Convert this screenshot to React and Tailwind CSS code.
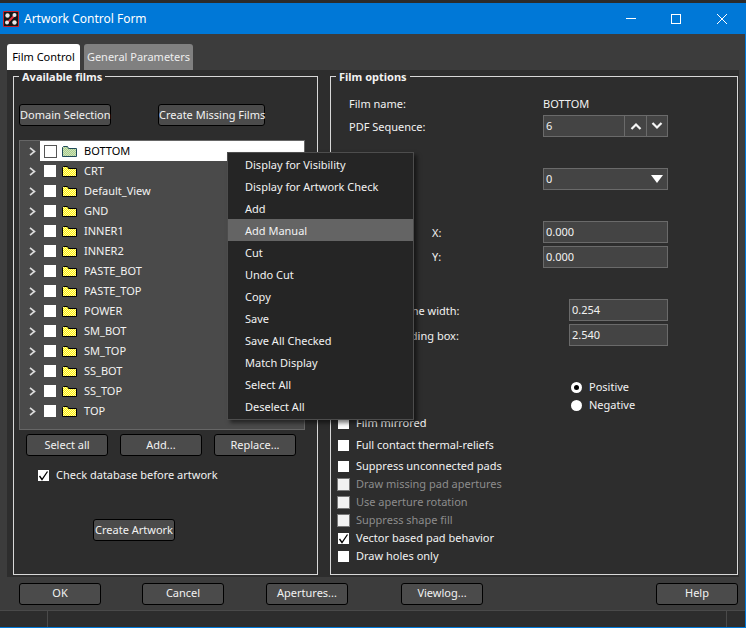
import React from 'react';

const FILMS = ['BOTTOM', 'CRT', 'Default_View', 'GND', 'INNER1', 'INNER2', 'PASTE_BOT', 'PASTE_TOP', 'POWER', 'SM_BOT', 'SM_TOP', 'SS_BOT', 'SS_TOP', 'TOP'];

const MENU = ['Display for Visibility', 'Display for Artwork Check', 'Add', 'Add Manual', 'Cut', 'Undo Cut', 'Copy', 'Save', 'Save All Checked', 'Match Display', 'Select All', 'Deselect All'];

const OPTIONS = [
  { label: 'Full contact thermal-reliefs', row: 'h-[22px]' },
  { label: 'Suppress unconnected pads', row: 'h-[18px] mt-px' },
  { label: 'Draw missing pad apertures', disabled: true },
  { label: 'Use aperture rotation', disabled: true },
  { label: 'Suppress shape fill', disabled: true },
  { label: 'Vector based pad behavior', checked: true },
  { label: 'Draw holes only' },
];

const Btn = ({ children, className = '' }) => (
  <button className={`h-[22px] rounded-[3px] border border-black bg-[#4b4b4b] text-center text-[#f2f2f2] whitespace-nowrap ${className}`}>
    {children}
  </button>
);

const Tick = () => (
  <svg width="11" height="11" viewBox="0 0 11 11">
    <path d="M1.5 6 L4 9.5 L9.5 1.5" fill="none" stroke="#000" strokeWidth="1.3" />
  </svg>
);

const Check = ({ checked, disabled }) => (
  <span className={`flex shrink-0 items-center justify-center ${disabled ? 'w-[13px] h-[13px] -mx-px border border-[#777] bg-[#f2f2f2]' : 'w-[11px] h-[11px] bg-white'}`}>
    {checked && <Tick />}
  </span>
);

// dithered fill, same in every row so the pattern ids can stay fixed
const Folder = ({ selected }) => {
  const id = selected ? 'ditherGreen' : 'ditherYellow';
  return (
    <svg width="15" height="11" viewBox="0 0 15 11" className="shrink-0">
      <defs>
        <pattern id={id} width="2" height="2" patternUnits="userSpaceOnUse">
          <rect width="2" height="2" fill={selected ? '#a8d088' : '#fff200'} />
          <rect width="1" height="1" fill={selected ? '#d0e0c0' : '#fffbb0'} />
          <rect x="1" y="1" width="1" height="1" fill={selected ? '#d0e0c0' : '#fffbb0'} />
        </pattern>
      </defs>
      <path d="M0.5 10.5 V1.5 L1.5 0.5 H5.5 L6.5 2.5 H14.5 V10.5 Z" fill={`url(#${id})`} stroke={selected ? '#1f4a5a' : '#000'} />
    </svg>
  );
};

const Chevron = () => (
  <svg width="7" height="9" viewBox="0 0 7 9" className="shrink-0">
    <path d="M1 0.8 L5.5 4.5 L1 8.2" fill="none" stroke="#dcdcdc" strokeWidth="1.7" />
  </svg>
);

const TreeRow = ({ name, selected }) => (
  <div className="flex h-5 items-center pl-[9px]">
    <Chevron />
    <div className={`ml-[4px] flex h-5 flex-1 items-center pl-[4px] ${selected ? 'bg-white text-black' : 'text-[#f2f2f2]'}`}>
      {selected ? (
        <span className="h-[13px] w-[13px] border border-[#555] bg-white" />
      ) : (
        <span className="h-3 w-3 bg-white" />
      )}
      <span className={selected ? 'ml-[5px]' : 'ml-[6px]'}>
        <Folder selected={selected} />
      </span>
      <span className="ml-[7px]">{name}</span>
    </div>
  </div>
);

const Field = ({ children, className = '' }) => (
  <div className={`flex h-[22px] items-center border border-[#6a6a6a] bg-[#444444] pl-[2px] text-[#f2f2f2] ${className}`}>
    {children}
  </div>
);

const Radio = ({ on }) => (
  <span className="flex h-[11px] w-[11px] items-center justify-center rounded-full bg-white">
    {on && <span className="h-[5px] w-[5px] rounded-full bg-black" />}
  </span>
);

const App = () => {
  return (
    <div className="relative flex h-[628px] w-[746px] flex-col overflow-hidden bg-[#3c3c3c] text-[11px] text-[#f2f2f2]" style={{ fontFamily: '"Noto Sans", sans-serif' }}>
      <div className="h-[3px] bg-[#2b2b2b]" />

      {/* Title bar */}
      <div className="flex h-[31px] items-center bg-[#0078d7] pl-[3px] text-[12px] text-white">
        <svg width="16" height="16" viewBox="0 0 16 16">
          <rect width="16" height="16" rx="1" fill="#c4202c" />
          <rect x="1" y="1" width="14" height="14" fill="#161616" />
          <path d="M4 12 L12 4" stroke="#e8303c" strokeWidth="2" />
          <circle cx="4.5" cy="4.5" r="2.2" fill="#e8e8e8" />
          <circle cx="11.5" cy="4" r="2" fill="#e8e8e8" />
          <circle cx="4" cy="11.5" r="2" fill="#e8e8e8" />
          <circle cx="11.5" cy="11.5" r="2.2" fill="#e8e8e8" />
        </svg>
        <span className="ml-[5px]">Artwork Control Form</span>
        <div className="ml-auto flex items-center">
          <span className="h-px w-[10px] bg-white" />
          <span className="ml-[35px] h-[10px] w-[10px] border border-white" />
          <svg width="10" height="10" viewBox="0 0 10 10" className="ml-[36px] mr-[19px]">
            <path d="M0 0 L10 10 M10 0 L0 10" stroke="#fff" />
          </svg>
        </div>
      </div>

      {/* Tabs */}
      <div className="flex h-[36px] items-end gap-[4px] pl-[7px]">
        <div className="flex h-[26px] w-[73px] items-center justify-center rounded-t-[3px] bg-white pt-px text-black">Film Control</div>
        <div className="flex h-[26px] w-[109px] items-center justify-center rounded-t-[3px] bg-[#808080] pt-px text-[#eeeeee]">General Parameters</div>
      </div>

      {/* Tab page */}
      <div className="ml-[7px] flex h-[507px] w-[732px] gap-[12px] bg-[#2d2d2d] pl-[6px] pr-[1px]">
        <fieldset className="flex h-[505px] w-[305px] flex-col border border-[#d8d8d8]">
          <legend className="ml-[5px] px-[3px] font-bold leading-[12px]"><span className="relative top-px">Available films</span></legend>
          <div className="mt-[22px] flex pl-[5px]">
            <Btn className="w-[92px]">Domain Selection</Btn>
            <Btn className="ml-[47px] w-[107px]">Create Missing Films</Btn>
          </div>
          <div className="ml-[5px] mt-[14px] h-[290px] w-[286px] border border-[#666] bg-[#4a4a4a]">
            {FILMS.map((f, i) => (
              <TreeRow key={f} name={f} selected={i === 0} />
            ))}
          </div>
          <div className="mt-[4px] flex gap-[12px] pl-[12px]">
            <Btn className="w-[82px]">Select all</Btn>
            <Btn className="w-[82px]">Add...</Btn>
            <Btn className="w-[82px]">Replace...</Btn>
          </div>
          <div className="mt-[13px] flex h-[12px] items-center gap-[7px] pl-[24px]">
            <Check checked />
            <span>Check database before artwork</span>
          </div>
          <Btn className="ml-[79px] mt-[38px] w-[82px]">Create Artwork</Btn>
        </fieldset>

        <fieldset className="flex h-[505px] w-[408px] flex-col border border-[#d8d8d8]">
          <legend className="ml-[5px] px-[3px] font-bold leading-[12px]"><span className="relative top-px">Film options</span></legend>
          <div className="mt-[15px] flex h-[14px] items-center pl-[18px]">
            <span className="w-[194px]">Film name:</span>
            <span>BOTTOM</span>
          </div>
          <div className="mt-[4px] flex h-[22px] items-center pl-[18px]">
            <span className="w-[194px] pt-[3px]">PDF Sequence:</span>
            <Field className="w-[125px]">
              <span className="flex-1 pt-px">6</span>
              <span className="flex h-full w-[22px] items-center justify-center border-l border-[#6a6a6a]">
                <svg width="12" height="8" viewBox="0 0 12 8"><path d="M1.5 7 L6 2.5 L10.5 7" fill="none" stroke="#f5f5f5" strokeWidth="2.2" /></svg>
              </span>
              <span className="flex h-full w-[21px] items-center justify-center border-l border-[#6a6a6a]">
                <svg width="12" height="8" viewBox="0 0 12 8"><path d="M1.5 1 L6 5.5 L10.5 1" fill="none" stroke="#f5f5f5" strokeWidth="2.2" /></svg>
              </span>
            </Field>
          </div>
          <div className="ml-[212px] mt-[31px]">
            <Field className="w-[125px] justify-between pr-[4px]">
              <span className="pt-px">0</span>
              <svg width="12" height="8" viewBox="0 0 12 8"><path d="M0 0 H12 L6 8 Z" fill="#fff" /></svg>
            </Field>
          </div>
          <div className="mt-[31px] flex items-center pl-[101px]">
            <span className="w-[111px] pt-[2px]">X:</span>
            <Field className="w-[125px]">0.000</Field>
          </div>
          <div className="mt-[3px] flex items-center pl-[101px]">
            <span className="w-[111px]">Y:</span>
            <Field className="w-[125px]">0.000</Field>
          </div>
          <div className="mt-[31px] flex items-center pl-[18px]">
            <span className="w-[220px] pt-[3px]">Undefined line width:</span>
            <Field className="w-[99px]"><span className="pt-px">0.254</span></Field>
          </div>
          <div className="mt-[3px] flex items-center pl-[18px]">
            <span className="w-[220px] pt-[3px]">Shape bounding box:</span>
            <Field className="w-[99px]"><span className="pt-px">2.540</span></Field>
          </div>
          <div className="mt-[32px] flex h-[18px] items-center gap-[7px] pl-[240px]">
            <Radio on />
            <span>Positive</span>
          </div>
          <div className="flex h-[18px] items-center gap-[7px] pl-[240px]">
            <Radio />
            <span>Negative</span>
          </div>
          <div className="flex h-[18px] items-center gap-[7px] pl-[7px]">
            <Check />
            <span>Film mirrored</span>
          </div>
          <div className="mt-[2px]">
            {OPTIONS.map((o) => (
              <div key={o.label} className={`flex items-center gap-[7px] pl-[7px] ${o.row || 'h-[18px]'}`}>
                <Check checked={o.checked} disabled={o.disabled} />
                <span className={o.disabled ? 'text-[#8c8c8c]' : ''}>{o.label}</span>
              </div>
            ))}
          </div>
        </fieldset>
      </div>

      {/* Bottom buttons */}
      <div className="flex h-[33px] items-center pl-[19px] pr-[8px]">
        <Btn className="w-[82px]">OK</Btn>
        <Btn className="ml-[41px] w-[82px]">Cancel</Btn>
        <Btn className="ml-[42px] w-[82px]">Apertures...</Btn>
        <Btn className="ml-[53px] w-[82px]">Viewlog...</Btn>
        <Btn className="ml-auto w-[82px]">Help</Btn>
      </div>

      {/* Status bar */}
      <div className="flex h-[17px] border-t border-[#4a4a4a] bg-[#2d2d2d]">
        <span className="w-[48px] border-r border-[#4a4a4a]" />
        <span className="ml-auto w-[20px] border-l border-[#4a4a4a]" />
      </div>
      <div className="h-px bg-[#0078d7]" />
      <div className="absolute bottom-0 right-0 top-[3px] w-px bg-[#0078d7]" />

      {/* Context menu */}
      <div className="absolute left-[227px] top-[152px] w-[187px] border border-[#4d4d4d] bg-[#252525] pb-[2px] shadow-[3px_3px_4px_rgba(0,0,0,0.5)]">
        {MENU.map((m) => (
          <div key={m} className={`flex h-[22px] items-center pl-[17px] pt-[2px] ${m === 'Add Manual' ? 'bg-[#646464]' : ''}`}>
            {m}
          </div>
        ))}
      </div>
    </div>
  );
};

export default App;
